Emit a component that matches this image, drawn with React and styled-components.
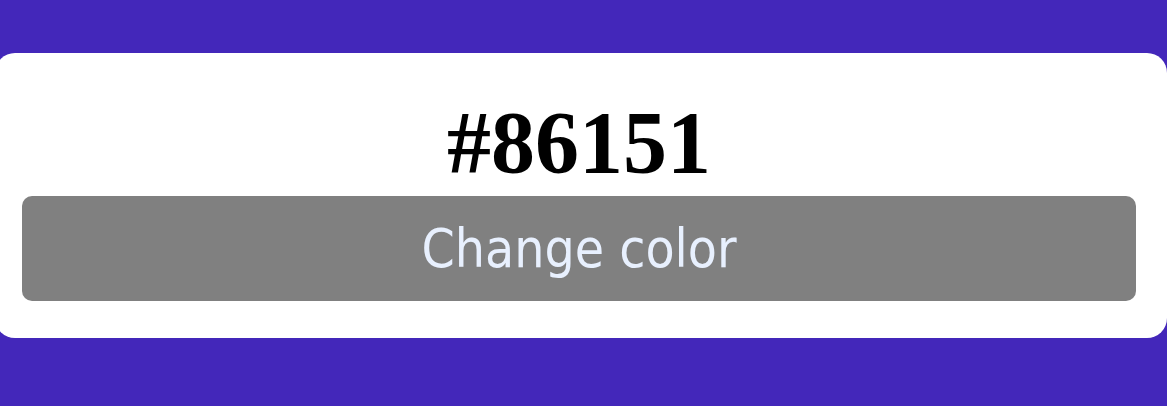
import styled, { createGlobalStyle } from "styled-components";

const GlobalStyle = createGlobalStyle`
    html, body {
        margin: 0;
        padding: 0;
        background: #4327ba;
        overflow: hidden;
    }
`;

const Page = styled.div`
    width: 1167px;
    height: 406px;
    background: #4327ba;
    padding-top: 53px;
    box-sizing: border-box;
`;

const Card = styled.div`
    margin-left: -5px;
    width: 1172px;
    box-sizing: border-box;
    background: #ffffff;
    border-radius: 20px;
    padding: 41px 31px 37px 27px;
    display: flex;
    flex-direction: column;
    align-items: center;
    gap: 5px;
`;

const Hex = styled.h1`
    margin: 0;
    font-family: "Liberation Serif", "Times New Roman", serif;
    font-weight: 700;
    font-size: 88px;
    line-height: 97px;
    color: #000;
`;

const Button = styled.button`
    width: 100%;
    height: 105px;
    border: none;
    border-radius: 10px;
    background: #808080;
    color: #e8f0fe;
    font-family: "DejaVu Sans Condensed", "DejaVu Sans", sans-serif;
    font-stretch: condensed;
    font-size: 53px;
    cursor: pointer;
    display: flex;
    align-items: center;
    justify-content: center;
`;

const App = () => {
    return (
        <>
            <GlobalStyle />
            <Page>
                <Card>
                    <Hex>#86151</Hex>
                    <Button>Change color</Button>
                </Card>
            </Page>
        </>
    );
};

export default App;
